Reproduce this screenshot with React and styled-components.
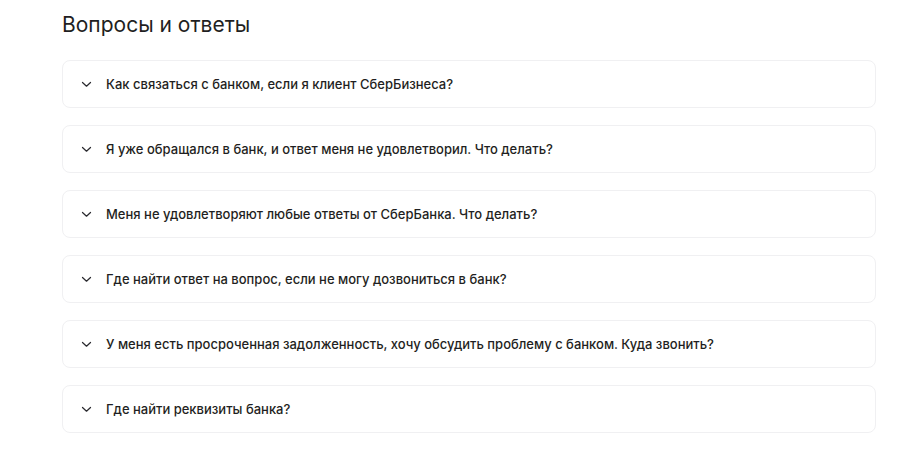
import styled, { createGlobalStyle } from 'styled-components';

const GlobalStyle = createGlobalStyle`
    body {
        margin: 0;
        background: #fff;
        font-family: Inter, "Noto Sans", Arial, sans-serif;
        color: #1f1f22;
    }
`

const Section = styled.section`
    padding: 12px 28px 0 62px;
`

const Title = styled.h2`
    margin: 0 0 23px;
    font-weight: 400;
    font-size: 21px;
    line-height: 25px;
`

const List = styled.div`
    display: flex;
    flex-direction: column;
    gap: 17px;
    width: 814px;
`

const Item = styled.div`
    box-sizing: border-box;
    height: 48px;
    border: 1px solid #f0f0f2;
    border-radius: 8px;
    display: flex;
    align-items: center;
    gap: 14px;
    padding: 0 18px;
`

const Question = styled.span`
    font-size: 13px;
    font-weight: 500;
    line-height: 16px;
    color: #1f1f22;
`

const Chevron = () => (
    <svg width="11" height="7" viewBox="0 0 11 7" fill="none">
        <path d="M1.5 1.5 L5.5 5.2 L9.5 1.5" stroke="#2b2b30" strokeWidth="1.25" strokeLinecap="round" strokeLinejoin="round" />
    </svg>
)

const questions = [
    'Как связаться с банком, если я клиент СберБизнеса?',
    'Я уже обращался в банк, и ответ меня не удовлетворил. Что делать?',
    'Меня не удовлетворяют любые ответы от СберБанка. Что делать?',
    'Где найти ответ на вопрос, если не могу дозвониться в банк?',
    'У меня есть просроченная задолженность, хочу обсудить проблему с банком. Куда звонить?',
    'Где найти реквизиты банка?',
]

const App = () => {
    return (
        <>
            <GlobalStyle />
            <Section>
                <Title>Вопросы и ответы</Title>
                <List>
                    {questions.map((q) => (
                        <Item key={q}>
                            <Chevron />
                            <Question>{q}</Question>
                        </Item>
                    ))}
                </List>
            </Section>
        </>
    );
};

export default App;
